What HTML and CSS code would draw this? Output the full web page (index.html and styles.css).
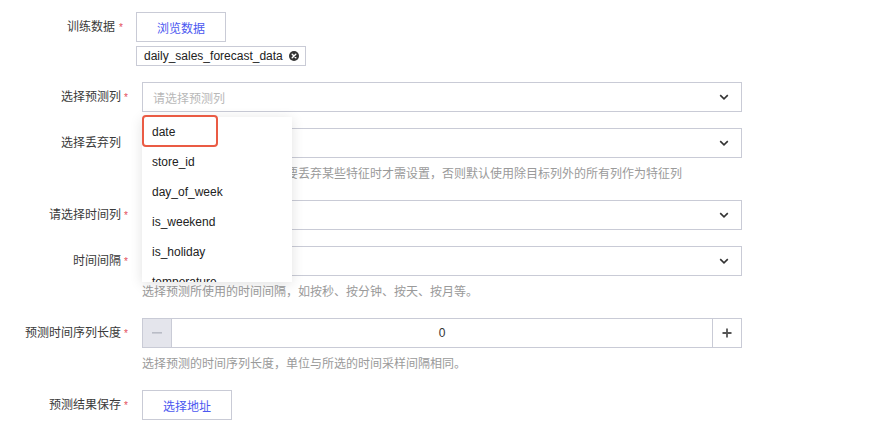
FILE: index.html
```html
<!DOCTYPE html>
<html lang="zh">
<head>
<meta charset="utf-8">
<link rel="stylesheet" href="styles.css">
</head>
<body>
<div class="form">
  <div class="row">
    <div class="label req first">训练数据</div>
    <div class="ctrl">
      <div class="upload">
        <button class="btn">浏览数据</button>
        <span class="tag">daily_sales_forecast_data
          <svg class="tag-x" width="10" height="10" viewBox="0 0 10 10"><circle cx="5" cy="5" r="5" fill="#333"/><path d="M3.2 3.2 L6.8 6.8 M6.8 3.2 L3.2 6.8" stroke="#fff" stroke-width="1.4" stroke-linecap="round"/></svg>
        </span>
      </div>
    </div>
  </div>

  <div class="row">
    <div class="label req">选择预测列</div>
    <div class="ctrl">
      <div class="select"><span class="ph">请选择预测列</span><svg class="chev" width="10" height="6" viewBox="0 0 10 6"><path d="M1.2 1.2 L5 4.8 L8.8 1.2" fill="none" stroke="#333" stroke-width="1.6"/></svg></div>
    </div>
  </div>

  <div class="row">
    <div class="label">选择丢弃列</div>
    <div class="ctrl">
      <div class="select"><span class="ph"></span><svg class="chev" width="10" height="6" viewBox="0 0 10 6"><path d="M1.2 1.2 L5 4.8 L8.8 1.2" fill="none" stroke="#333" stroke-width="1.6"/></svg></div>
      <div class="hint">选择需要丢弃的列，仅在需要丢弃某些特征时才需设置，否则默认使用除目标列外的所有列作为特征列</div>
    </div>
  </div>

  <div class="row">
    <div class="label req">请选择时间列</div>
    <div class="ctrl">
      <div class="select"><span class="ph"></span><svg class="chev" width="10" height="6" viewBox="0 0 10 6"><path d="M1.2 1.2 L5 4.8 L8.8 1.2" fill="none" stroke="#333" stroke-width="1.6"/></svg></div>
    </div>
  </div>

  <div class="row">
    <div class="label req">时间间隔</div>
    <div class="ctrl">
      <div class="select"><span class="ph"></span><svg class="chev" width="10" height="6" viewBox="0 0 10 6"><path d="M1.2 1.2 L5 4.8 L8.8 1.2" fill="none" stroke="#333" stroke-width="1.6"/></svg></div>
      <div class="hint">选择预测所使用的时间间隔，如按秒、按分钟、按天、按月等。</div>
    </div>
  </div>

  <div class="row">
    <div class="label req">预测时间序列长度</div>
    <div class="ctrl">
      <div class="number">
        <span class="step minus"><svg width="10" height="2" viewBox="0 0 10 2"><rect width="10" height="1.6" fill="#b9bcc6"/></svg></span>
        <span class="val">0</span>
        <span class="step plus"><svg width="10" height="10" viewBox="0 0 10 10"><path d="M5 0.5 V9.5 M0.5 5 H9.5" stroke="#555" stroke-width="1.8"/></svg></span>
      </div>
      <div class="hint">选择预测的时间序列长度，单位与所选的时间采样间隔相同。</div>
    </div>
  </div>

  <div class="row last">
    <div class="label req">预测结果保存</div>
    <div class="ctrl">
      <button class="btn btn-addr">选择地址</button>
    </div>
  </div>

  <div class="dropdown">
    <div class="opt">date</div>
    <div class="opt">store_id</div>
    <div class="opt">day_of_week</div>
    <div class="opt">is_weekend</div>
    <div class="opt">is_holiday</div>
    <div class="opt">temperature</div>
  </div>
  <div class="mark"></div>
</div>
</body>
</html>
```

FILE: styles.css
```css
* { box-sizing: border-box; }
html, body { margin: 0; padding: 0; background: #fff; }
body {
  font-family: "Liberation Sans", "Noto Sans CJK SC", sans-serif;
  font-size: 12px;
  color: #333;
}
.form {
  position: relative;
  padding-top: 12px;
  width: 870px;
}
.row {
  display: grid;
  grid-template-columns: 121px 600px;
  column-gap: 21px;
  margin-bottom: 16px;
}
.row.last { margin-top: 6px; }
.label {
  text-align: right;
  line-height: 30px;
  height: 30px;
  color: #3a3a3a;
  position: relative;
  white-space: nowrap;
}
.label.first { padding-right: 6px; }
.label.req::after {
  content: "*";
  position: absolute;
  left: calc(100% + 3px);
  top: 1px;
  color: #e34d59;
  font-size: 10px;
}
.label.first::after { left: calc(100% - 2px); }
.ctrl { display: flex; flex-direction: column; }
.upload { margin-left: -6px; display: flex; flex-direction: column; align-items: flex-start; }
.btn {
  width: 90px;
  height: 30px;
  border: 1px solid #c9cbd6;
  background: #fff;
  color: #4b58f0;
  font-family: inherit;
  font-size: 12px;
  padding: 0;
  cursor: pointer;
}
.btn-addr { width: 90px; }
.tag {
  margin-top: 4px;
  height: 20px;
  border: 1px solid #c9cbd6;
  display: inline-flex;
  align-items: center;
  padding: 0 8px 0 7px;
  color: #222;
  font-size: 12px;
  gap: 6px;
  width: 170px;
}
.tag-x { flex: none; }
.select {
  height: 30px;
  border: 1px solid #c9cbd6;
  display: flex;
  align-items: center;
  justify-content: space-between;
  padding: 0 12px 0 10px;
}
.ph { color: #b8b8b8; }
.chev { flex: none; }
.hint {
  margin-top: 6px;
  line-height: 20px;
  color: #9a9a9a;
}
.number {
  height: 30px;
  border: 1px solid #c9cbd6;
  display: flex;
}
.step {
  width: 29px;
  flex: none;
  display: flex;
  align-items: center;
  justify-content: center;
}
.minus { background: #e4e5ec; border-right: 1px solid #c9cbd6; }
.plus { border-left: 1px solid #c9cbd6; }
.val {
  flex: 1;
  text-align: center;
  line-height: 28px;
  color: #333;
}
.dropdown {
  position: absolute;
  left: 142px;
  top: 117px;
  width: 150px;
  height: 165px;
  overflow: hidden;
  background: #fff;
  box-shadow: 0 2px 12px rgba(0, 0, 0, 0.12);
}
.opt {
  height: 30px;
  line-height: 30px;
  padding-left: 10px;
  color: #222;
  font-size: 12px;
}
.mark {
  position: absolute;
  left: 142px;
  top: 115px;
  width: 76px;
  height: 32px;
  border: 2px solid #ea5b44;
  border-radius: 4px;
}
```
